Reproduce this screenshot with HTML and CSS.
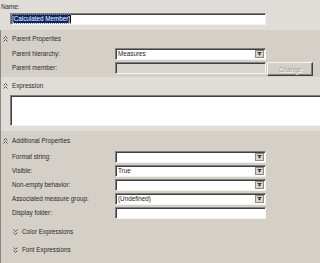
FILE: index.html
```
<!DOCTYPE html>
<html lang="en">
<head>
  <meta charset="utf-8">
  <title>Calculated Member</title>
  <link rel="stylesheet" href="styles.css">
</head>
<body>
  <div class="name-block">
    <div class="name-label">Name:</div>
    <div class="textbox name-box"><span class="sel">[Calculated Member]</span><span class="caret"></span></div>
  </div>

  <section class="group dark parent">
    <div class="group-head">
      <svg class="chev" width="5" height="6" viewBox="0 0 5 6"><path d="M0.5 2.5 L2.5 0.5 L4.5 2.5 M0.5 5.5 L2.5 3.5 L4.5 5.5" fill="none" stroke="#333" stroke-width="0.8"/></svg>
      Parent Properties
    </div>
    <div class="row">
      <label>Parent hierarchy:</label>
      <div class="combo"><span class="value">Measures</span><span class="drop"><svg width="5" height="4" viewBox="0 0 5 4"><path d="M0.5 0 H4.5 V0.8 H0.5 Z M1 1.6 H4 L2.5 3.4 Z" fill="#000"/></svg></span></div>
    </div>
    <div class="row">
      <label>Parent member:</label>
      <div class="textbox combo-size disabled"></div>
      <button class="btn" disabled>Change</button>
    </div>
  </section>

  <section class="group light expression">
    <div class="group-head">
      <svg class="chev" width="5" height="6" viewBox="0 0 5 6"><path d="M0.5 2.5 L2.5 0.5 L4.5 2.5 M0.5 5.5 L2.5 3.5 L4.5 5.5" fill="none" stroke="#333" stroke-width="0.8"/></svg>
      Expression
    </div>
    <div class="textbox expr-box"></div>
  </section>

  <section class="group dark additional">
    <div class="group-head">
      <svg class="chev" width="5" height="6" viewBox="0 0 5 6"><path d="M0.5 2.5 L2.5 0.5 L4.5 2.5 M0.5 5.5 L2.5 3.5 L4.5 5.5" fill="none" stroke="#333" stroke-width="0.8"/></svg>
      Additional Properties
    </div>
    <div class="row">
      <label>Format string:</label>
      <div class="combo"><span class="value"></span><span class="drop"><svg width="5" height="4" viewBox="0 0 5 4"><path d="M0.5 0 H4.5 V0.8 H0.5 Z M1 1.6 H4 L2.5 3.4 Z" fill="#000"/></svg></span></div>
    </div>
    <div class="row">
      <label>Visible:</label>
      <div class="combo"><span class="value">True</span><span class="drop"><svg width="5" height="4" viewBox="0 0 5 4"><path d="M0.5 0 H4.5 V0.8 H0.5 Z M1 1.6 H4 L2.5 3.4 Z" fill="#000"/></svg></span></div>
    </div>
    <div class="row">
      <label>Non-empty behavior:</label>
      <div class="combo"><span class="value"></span><span class="drop"><svg width="5" height="4" viewBox="0 0 5 4"><path d="M0.5 0 H4.5 V0.8 H0.5 Z M1 1.6 H4 L2.5 3.4 Z" fill="#000"/></svg></span></div>
    </div>
    <div class="row">
      <label>Associated measure group:</label>
      <div class="combo"><span class="value">(Undefined)</span><span class="drop"><svg width="5" height="4" viewBox="0 0 5 4"><path d="M0.5 0 H4.5 V0.8 H0.5 Z M1 1.6 H4 L2.5 3.4 Z" fill="#000"/></svg></span></div>
    </div>
    <div class="row">
      <label>Display folder:</label>
      <div class="textbox combo-size"></div>
    </div>

    <div class="sub-head color">
      <svg class="chev" width="5" height="6" viewBox="0 0 5 6"><path d="M0.5 0.5 L2.5 2.5 L4.5 0.5 M0.5 3.5 L2.5 5.5 L4.5 3.5" fill="none" stroke="#333" stroke-width="0.8"/></svg>
      Color Expressions
    </div>
    <div class="sub-head font">
      <svg class="chev" width="5" height="6" viewBox="0 0 5 6"><path d="M0.5 0.5 L2.5 2.5 L4.5 0.5 M0.5 3.5 L2.5 5.5 L4.5 3.5" fill="none" stroke="#333" stroke-width="0.8"/></svg>
      Font Expressions
    </div>
  </section>
</body>
</html>
```

FILE: styles.css
```
body {
  margin: 0;
  font-family: "Liberation Sans", Arial, sans-serif;
  font-size: 6.3px;
  color: #2a2a2a;
  background: #d4d0c8;
  height: 263px;
  overflow: hidden;
}
.name-block {
  background: #e0ddd8;
  height: 30px;
  padding-top: 3px;
  box-sizing: border-box;
}
.name-label {
  height: 8px;
  line-height: 8px;
  padding-left: 1px;
}
.textbox {
  box-sizing: border-box;
  background: #fff;
  border: 1px solid;
  border-color: #808080 #f4f3f0 #f4f3f0 #808080;
  box-shadow: inset 1px 1px #404040;
}
.name-box {
  margin: 2px 0 0 10px;
  width: 256px;
  height: 12px;
  display: flex;
  align-items: center;
  padding-left: 1px;
}
.sel {
  background: #0a246a;
  color: #fff;
  line-height: 8px;
  outline: 1px dotted #888;
}
.caret {
  width: 1px;
  height: 8px;
  background: #000;
}
.group {
  border-left: 1px solid #8a8782;
  box-sizing: border-box;
}
.dark {
  background: #d4d0c8;
}
.light {
  background: #e0ddd8;
}
.group-head {
  display: flex;
  align-items: center;
  height: 8px;
  line-height: 8px;
  padding-left: 2px;
  margin-bottom: 4px;
}
.chev {
  margin-right: 4px;
}
.parent {
  height: 47px;
  padding-top: 5px;
}
.expression {
  height: 54px;
  padding-top: 5px;
}
.expression .group-head {
  margin-bottom: 5px;
}
.expr-box {
  margin-left: 9px;
  height: 31px;
  border-right: none;
}
.additional {
  height: 132px;
  padding-top: 6px;
}
.additional .group-head {
  margin-bottom: 5px;
}
.row {
  display: flex;
  align-items: flex-start;
  height: 14px;
  padding-top: 1px;
  box-sizing: border-box;
}
.row label {
  width: 103px;
  padding-left: 11px;
  line-height: 12px;
  height: 12px;
}
.combo,
.combo-size {
  width: 151px;
  height: 12px;
  box-sizing: border-box;
}
.combo {
  display: flex;
  align-items: stretch;
  background: #fff;
  border: 1px solid;
  border-color: #808080 #f4f3f0 #f4f3f0 #808080;
  box-shadow: inset 1px 1px #404040;
  padding: 1px 1px 1px 2px;
}
.combo .value {
  flex: 1;
  line-height: 8px;
  color: #222;
}
.drop {
  width: 9px;
  box-sizing: border-box;
  background: #d8d5cf;
  border: 1px solid #8d8a85;
  display: flex;
  align-items: center;
  justify-content: center;
}
.disabled {
  background: #d8d5cf;
}
.btn {
  margin-left: 1px;
  width: 46px;
  height: 14px;
  padding: 0;
  font: inherit;
  color: #a19d95;
  text-shadow: 1px 1px #fff;
  background: #d4d0c8;
  border: 1px solid;
  border-color: #f4f3f0 #404040 #404040 #f4f3f0;
  box-shadow: inset -1px -1px #808080;
}
.sub-head {
  display: flex;
  align-items: center;
  height: 8px;
  line-height: 8px;
  padding-left: 12px;
}
.sub-head .chev {
  margin-right: 4px;
}
.sub-head.color {
  margin-top: 8px;
}
.sub-head.font {
  margin-top: 10px;
}
```
